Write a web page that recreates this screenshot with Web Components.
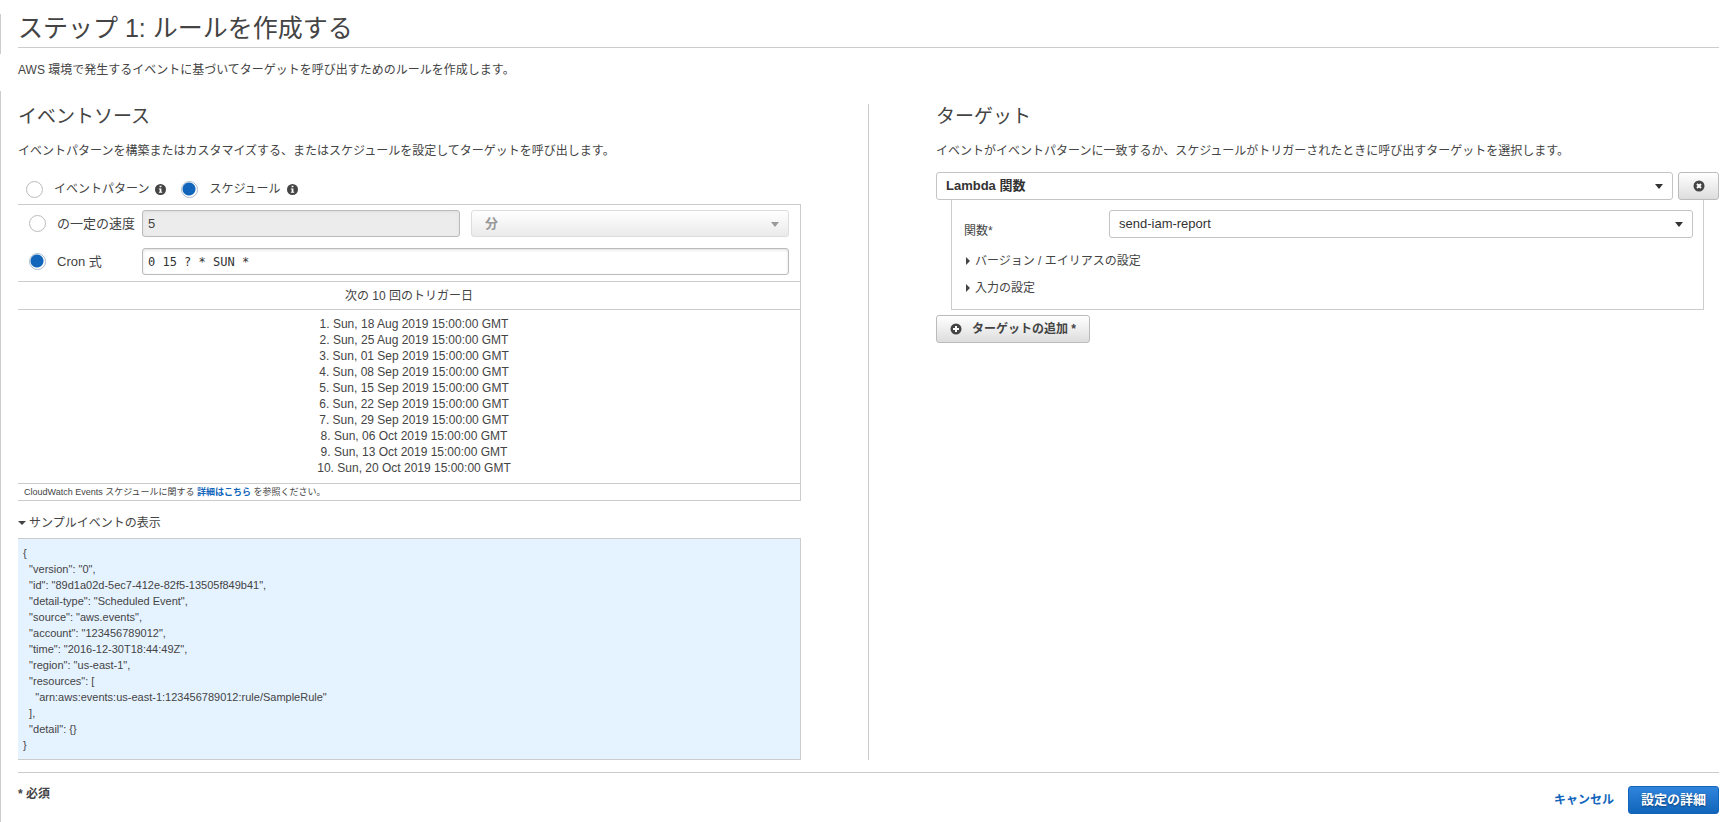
<!DOCTYPE html>
<html lang="ja">
<head>
<meta charset="utf-8">
<title>ステップ 1: ルールを作成する</title>
<style>
html{--line:#ccc;--link:#1166bb;background:#fff}
body{margin:0;color:#444;font:12px/16px "Liberation Sans","Noto Sans CJK JP",sans-serif}
</style>
</head>
<body>
<rule-wizard></rule-wizard>
<script>
const define=(name,html,setup)=>{
  const t=document.createElement('template');
  t.innerHTML='<style>*{box-sizing:border-box}:host{box-sizing:border-box;display:block}</style>'+html;
  customElements.define(name,class extends HTMLElement{
    constructor(){super();this.attachShadow({mode:'open'}).append(t.content.cloneNode(true));}
    connectedCallback(){if(setup)setup(this,this.shadowRoot);}
  });
};

define('info-icon',`<style>:host{display:inline-flex}svg{display:block}</style>
<svg width="11" height="11" viewBox="0 0 12 12" role="img" aria-label="情報"><circle cx="6" cy="6" r="6" fill="#444"/><path d="M5 2h2v1.6H5zM4.2 4.8H7v3.6h.9v1.2H4.2V8.4h.9V6h-.9z" fill="#fff"/></svg>`);

define('radio-choice',`<style>
:host{display:inline-flex;font-size:13px}
label{display:flex;align-items:center;gap:11px;line-height:18px;white-space:nowrap}
input{appearance:none;flex:none;width:17px;height:17px;margin:0;border:1px solid #bbb;border-radius:50%;background:#fff}
input:checked{border-color:#a9bccf;background:radial-gradient(circle at 7px 7px,var(--link) 6px,#fff 7px)}
</style><label><input type="radio"><slot></slot></label>`,(el,root)=>{
  const i=root.querySelector('input');
  i.name=el.getAttribute('group');i.checked=el.hasAttribute('checked');
  i.addEventListener('change',()=>{
    el.getRootNode().querySelectorAll('radio-choice').forEach(o=>{
      if(o!==el&&o.getAttribute('group')===i.name)o.shadowRoot.querySelector('input').checked=false;
    });
  });
});

define('select-box',`<style>
:host{display:block;position:relative;min-width:0}
select{appearance:none;display:block;width:100%;height:28px;margin:0;padding:0 26px 0 9px;border:1px solid #c4c4c4;border-radius:3px;background:#fff;color:#333;font:13px/18px "Liberation Sans","Noto Sans CJK JP",sans-serif}
:host([bold]) select{font-weight:bold}
:host([disabled]) select{height:27px;padding-left:13px;border-color:#ddd;background:linear-gradient(#fff,#eaeaea);color:#999;opacity:1}
svg{position:absolute;right:10px;top:12px;color:#333;pointer-events:none}
:host([disabled]) svg{color:#999}
</style><select><option></option></select>
<svg width="8" height="5" viewBox="0 0 8 5"><path d="M0 0h8L4 5z" fill="currentColor"/></svg>`,(el,root)=>{
  root.querySelector('option').textContent=el.getAttribute('value');
  const s=root.querySelector('select');
  s.setAttribute('aria-label',el.getAttribute('label'));
  s.disabled=el.hasAttribute('disabled');
});

define('text-field',`<style>
input{display:block;width:100%;height:27px;margin:0;padding:0 5px;border:1px solid #bbb;border-radius:3px;background:#fff;box-shadow:inset 0 1px 3px #ddd;color:#333;font:13px/18px "Liberation Sans",sans-serif}
input:disabled{background:#ececec;color:#444}
:host([mono]) input{font:12px/18px "DejaVu Sans Mono",monospace}
</style><input type="text">`,(el,root)=>{
  const i=root.querySelector('input');
  i.value=el.getAttribute('value');
  i.setAttribute('aria-label',el.getAttribute('label'));
  i.disabled=el.hasAttribute('disabled');
});

define('push-button',`<style>
:host{display:inline-block}
button{display:flex;align-items:center;justify-content:center;gap:10px;width:100%;height:28px;margin:0;padding:0 13px;border:1px solid #bbb;border-radius:3px;background:linear-gradient(#fff,#ddd);color:#444;font:bold 12px/18px "Liberation Sans","Noto Sans CJK JP",sans-serif;white-space:nowrap}
:host([primary]) button{padding:0 12px;border-color:#1166bb;background:linear-gradient(#3084dc,#1166bb);color:#fff;font-size:13px;text-shadow:0 1px 2px #0a3f78}
</style><button type="button"><slot></slot></button>`,(el,root)=>{
  if(el.hasAttribute('label'))root.querySelector('button').setAttribute('aria-label',el.getAttribute('label'));
});

define('fold-section',`<style>
summary{display:flex;align-items:center;gap:3px;list-style:none;cursor:pointer}
summary svg{flex:none;transform:rotate(-90deg)}
details[open] summary svg{transform:none}
</style><details><summary><svg width="8" height="8" viewBox="0 0 8 8"><path d="M0 2h8L4 6z" fill="#444"/></svg><slot name="title"></slot></summary><slot></slot></details>`,(el,root)=>{
  root.querySelector('details').open=el.hasAttribute('open');
});

define('trigger-dates',`<style>
h3{margin:0;padding:6px 0 5px;border-bottom:1px solid var(--line);font:12px/16px "Liberation Sans","Noto Sans CJK JP",sans-serif;text-align:center}
ol{margin:0;padding:6px 0 7px 10px;list-style:none;text-align:center}
</style><h3>次の 10 回のトリガー日</h3><ol></ol>`,(el,root)=>{
  const ol=root.querySelector('ol');
  ['18 Aug','25 Aug','01 Sep','08 Sep','15 Sep','22 Sep','29 Sep','06 Oct','13 Oct','20 Oct'].forEach((d,n)=>{
    const li=document.createElement('li');
    li.textContent=(n+1)+'. Sun, '+d+' 2019 15:00:00 GMT';
    ol.append(li);
  });
});

define('sample-event',`<style>
pre{margin:7px 0 0;padding:6px 5px;border:1px solid var(--line);border-left:0;background:#e5f2ff;color:#444;font:11px/16px "Liberation Sans",sans-serif}
</style><fold-section open><span slot="title">サンプルイベントの表示</span><pre>{
  "version": "0",
  "id": "89d1a02d-5ec7-412e-82f5-13505f849b41",
  "detail-type": "Scheduled Event",
  "source": "aws.events",
  "account": "123456789012",
  "time": "2016-12-30T18:44:49Z",
  "region": "us-east-1",
  "resources": [
    "arn:aws:events:us-east-1:123456789012:rule/SampleRule"
  ],
  "detail": {}
}</pre></fold-section>`);

const panelHead=`h2{margin:0;padding-top:1px;font-size:19px;line-height:24px;font-weight:normal}
p.lead{margin:14px 0 0;line-height:16px}`;

define('source-panel',`<style>${panelHead}
.modes{display:flex;align-items:center;margin:21px 0 6px;padding-left:8px}
.modes radio-choice{font-size:12px}
.modes info-icon{margin-left:6px}
.modes radio-choice+info-icon+radio-choice{margin-left:15px}
.box{border:1px solid var(--line);border-left:0}
.form{display:grid;grid-template-columns:102px 1fr 1fr;gap:11px;align-items:center;padding:5px 11px 6px 11px;border-bottom:1px solid var(--line)}
.form select-box{font-weight:bold}
.wide{grid-column:2/4}
.note{padding:0 6px;border-top:1px solid var(--line);font-size:9px;line-height:16px}
.note a{color:var(--link);text-decoration:none;font-weight:bold}
sample-event{margin-top:14px}
</style>
<h2>イベントソース</h2>
<p class="lead">イベントパターンを構築またはカスタマイズする、またはスケジュールを設定してターゲットを呼び出します。</p>
<div class="modes"><radio-choice group="mode">イベントパターン</radio-choice><info-icon></info-icon><radio-choice group="mode" checked>スケジュール</radio-choice><info-icon></info-icon></div>
<div class="box">
<div class="form">
<radio-choice group="kind">の一定の速度</radio-choice><text-field value="5" label="の一定の速度" disabled></text-field><select-box bold value="分" label="単位" disabled></select-box>
<radio-choice group="kind" checked>Cron 式</radio-choice><text-field class="wide" mono value="0 15 ? * SUN *" label="Cron 式"></text-field>
</div>
<trigger-dates></trigger-dates>
<div class="note">CloudWatch Events スケジュールに関する <a href="#">詳細はこちら</a> を参照ください。</div>
</div>
<sample-event></sample-event>`);

define('target-panel',`<style>${panelHead}
.pick{display:grid;grid-template-columns:1fr 41px;gap:5px;margin-top:13px}
.pick push-button{position:relative}
.detail{margin:0 15px 5px;padding:10px 10px 12px 12px;border:1px solid var(--line);border-top:0}
.row{display:grid;grid-template-columns:145px 1fr;align-items:start}
.row span{padding-top:13px}
fold-section{line-height:18px;margin-top:9px}
.row+fold-section{margin-top:13px}
svg{display:block;flex:none}
</style>
<h2>ターゲット</h2>
<p class="lead">イベントがイベントパターンに一致するか、スケジュールがトリガーされたときに呼び出すターゲットを選択します。</p>
<div class="pick"><select-box bold value="Lambda 関数" label="ターゲットタイプ"></select-box>
<push-button label="削除"><svg width="12" height="12" viewBox="0 0 12 12"><circle cx="6" cy="6" r="5.5" fill="#444"/><path d="M4 4l4 4M8 4l-4 4" stroke="#fff" stroke-width="2"/></svg></push-button></div>
<div class="detail">
<div class="row"><span>関数*</span><select-box value="send-iam-report" label="関数"></select-box></div>
<fold-section><span slot="title">バージョン / エイリアスの設定</span></fold-section>
<fold-section><span slot="title">入力の設定</span></fold-section>
</div>
<push-button><svg width="12" height="12" viewBox="0 0 12 12"><circle cx="6" cy="6" r="5.5" fill="#444"/><path d="M6 3v6M3 6h6" stroke="#fff" stroke-width="2"/></svg>ターゲットの追加 *</push-button>`);

define('rule-wizard',`<style>
:host{padding-top:14px}
header{height:40px;padding:0 12px 0 17px;border-left:1px solid var(--line)}
h1{margin:0;height:34px;border-bottom:1px solid var(--line);font-size:25px;line-height:29px;font-weight:normal}
.intro{margin:0;padding:8px 12px 13px 18px;line-height:16px}
main{min-height:731px;padding:13px 12px 0 17px;border-left:1px solid var(--line)}
.cols{display:grid;grid-template-columns:1fr 1px 1fr;gap:67px}
.rule{background:var(--line)}
footer{display:flex;align-items:flex-start;justify-content:space-between;margin-top:12px;padding-top:13px;border-top:1px solid var(--line);line-height:16px;font-weight:bold}
.actions{display:flex;align-items:center;gap:14px}
a{color:var(--link);text-decoration:none}
</style>
<header><h1>ステップ 1: ルールを作成する</h1></header>
<p class="intro">AWS 環境で発生するイベントに基づいてターゲットを呼び出すためのルールを作成します。</p>
<main>
<div class="cols"><source-panel></source-panel><div class="rule"></div><target-panel></target-panel></div>
<footer><span>* 必須</span><div class="actions"><a href="#">キャンセル</a><push-button primary>設定の詳細</push-button></div></footer>
</main>`);
</script>
</body>
</html>
